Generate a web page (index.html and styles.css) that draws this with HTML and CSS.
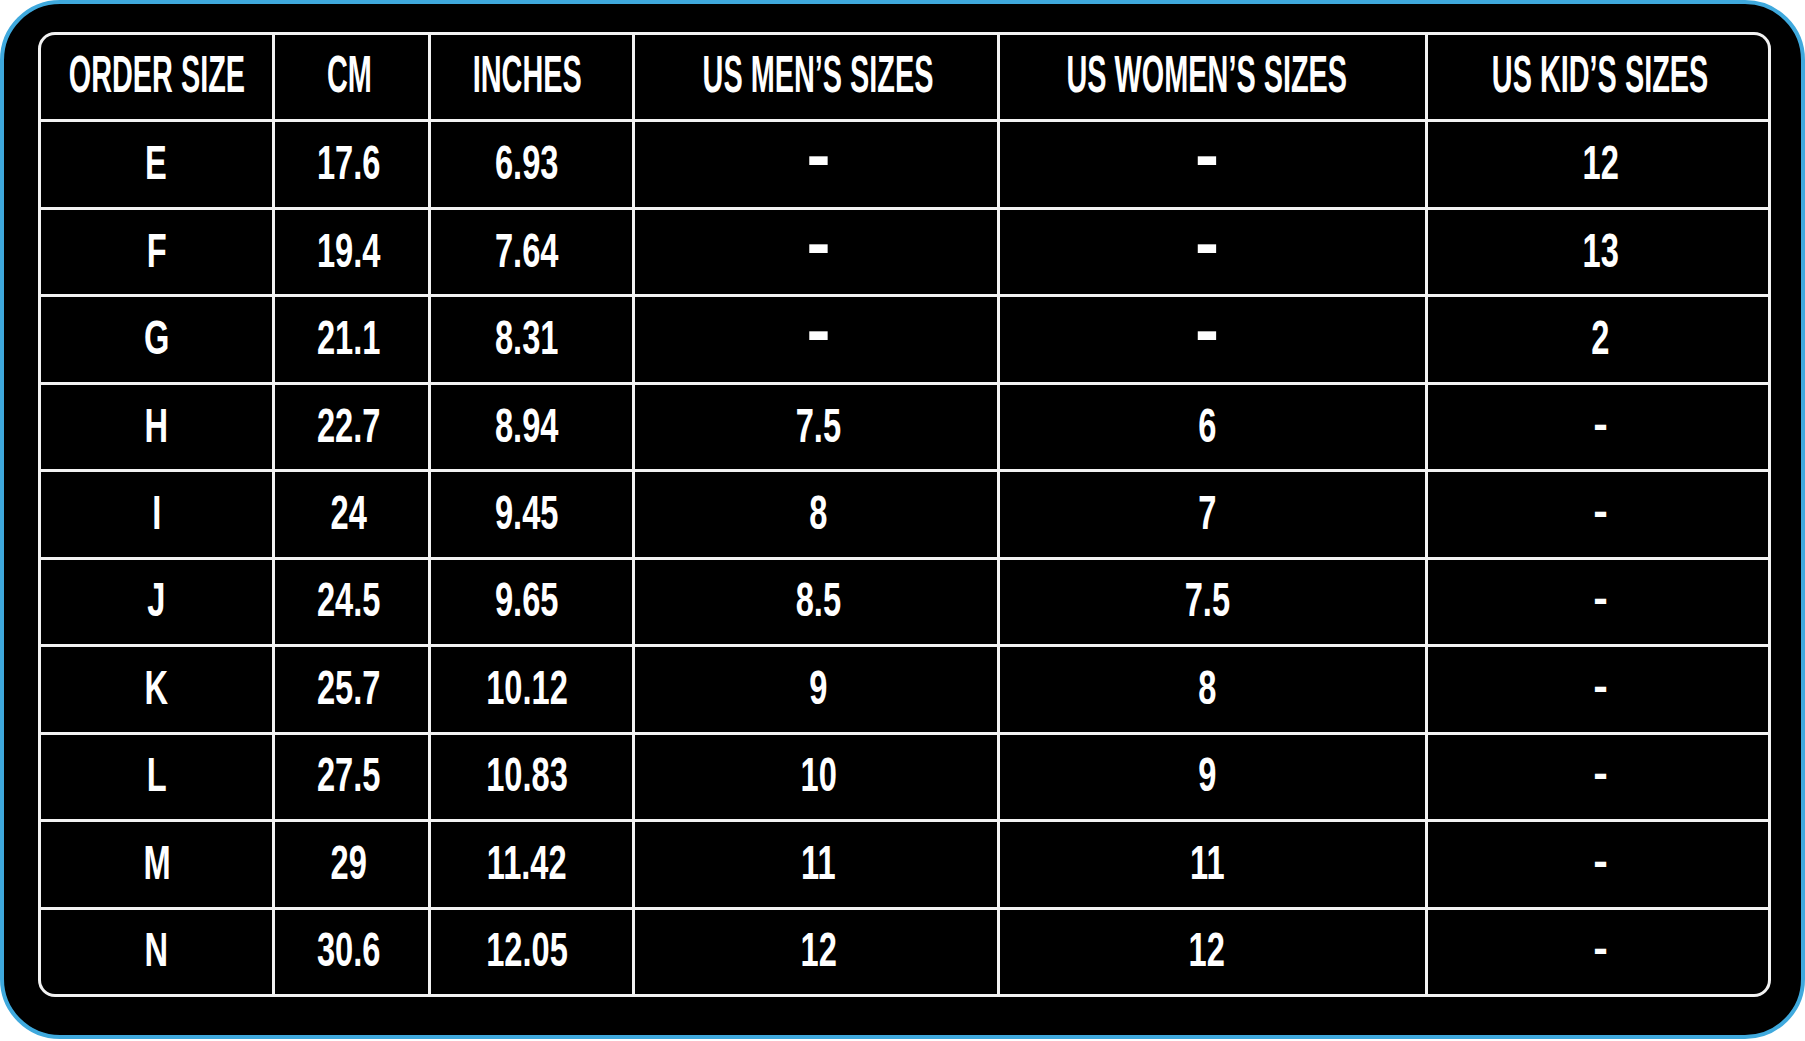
FILE: index.html
```html
<!DOCTYPE html>
<html lang="en">
<head>
<meta charset="utf-8">
<title>Size chart</title>
<link rel="stylesheet" href="styles.css">
</head>
<body>
<div class="frame">
  <div class="chart">
    <div class="cell head"><span class="t">ORDER SIZE</span></div>
    <div class="cell head"><span class="t">CM</span></div>
    <div class="cell head"><span class="t">INCHES</span></div>
    <div class="cell head"><span class="t">US MEN’S SIZES</span></div>
    <div class="cell head"><span class="t">US WOMEN’S SIZES</span></div>
    <div class="cell head"><span class="t">US KID’S SIZES</span></div>

    <div class="cell"><span class="t">E</span></div>
    <div class="cell"><span class="t">17.6</span></div>
    <div class="cell"><span class="t">6.93</span></div>
    <div class="cell"><span class="dash-lg">-</span></div>
    <div class="cell"><span class="dash-lg">-</span></div>
    <div class="cell"><span class="t">12</span></div>

    <div class="cell"><span class="t">F</span></div>
    <div class="cell"><span class="t">19.4</span></div>
    <div class="cell"><span class="t">7.64</span></div>
    <div class="cell"><span class="dash-lg">-</span></div>
    <div class="cell"><span class="dash-lg">-</span></div>
    <div class="cell"><span class="t">13</span></div>

    <div class="cell"><span class="t">G</span></div>
    <div class="cell"><span class="t">21.1</span></div>
    <div class="cell"><span class="t">8.31</span></div>
    <div class="cell"><span class="dash-lg">-</span></div>
    <div class="cell"><span class="dash-lg">-</span></div>
    <div class="cell"><span class="t">2</span></div>

    <div class="cell"><span class="t">H</span></div>
    <div class="cell"><span class="t">22.7</span></div>
    <div class="cell"><span class="t">8.94</span></div>
    <div class="cell"><span class="t">7.5</span></div>
    <div class="cell"><span class="t">6</span></div>
    <div class="cell"><span class="dash-sm">-</span></div>

    <div class="cell"><span class="t">I</span></div>
    <div class="cell"><span class="t">24</span></div>
    <div class="cell"><span class="t">9.45</span></div>
    <div class="cell"><span class="t">8</span></div>
    <div class="cell"><span class="t">7</span></div>
    <div class="cell"><span class="dash-sm">-</span></div>

    <div class="cell"><span class="t">J</span></div>
    <div class="cell"><span class="t">24.5</span></div>
    <div class="cell"><span class="t">9.65</span></div>
    <div class="cell"><span class="t">8.5</span></div>
    <div class="cell"><span class="t">7.5</span></div>
    <div class="cell"><span class="dash-sm">-</span></div>

    <div class="cell"><span class="t">K</span></div>
    <div class="cell"><span class="t">25.7</span></div>
    <div class="cell"><span class="t">10.12</span></div>
    <div class="cell"><span class="t">9</span></div>
    <div class="cell"><span class="t">8</span></div>
    <div class="cell"><span class="dash-sm">-</span></div>

    <div class="cell"><span class="t">L</span></div>
    <div class="cell"><span class="t">27.5</span></div>
    <div class="cell"><span class="t">10.83</span></div>
    <div class="cell"><span class="t">10</span></div>
    <div class="cell"><span class="t">9</span></div>
    <div class="cell"><span class="dash-sm">-</span></div>

    <div class="cell"><span class="t">M</span></div>
    <div class="cell"><span class="t">29</span></div>
    <div class="cell"><span class="t">11.42</span></div>
    <div class="cell"><span class="t">11</span></div>
    <div class="cell"><span class="t">11</span></div>
    <div class="cell"><span class="dash-sm">-</span></div>

    <div class="cell"><span class="t">N</span></div>
    <div class="cell"><span class="t">30.6</span></div>
    <div class="cell"><span class="t">12.05</span></div>
    <div class="cell"><span class="t">12</span></div>
    <div class="cell"><span class="t">12</span></div>
    <div class="cell"><span class="dash-sm">-</span></div>
  </div>
</div>
</body>
</html>
```

FILE: styles.css
```css
html, body {
  margin: 0;
  padding: 0;
  background: #ffffff;
}

body {
  width: 1805px;
  height: 1041px;
  overflow: hidden;
  font-family: "Liberation Sans", Arial, sans-serif;
}

.frame {
  box-sizing: border-box;
  width: 1805px;
  height: 1039px;
  border: 4px solid #3fa9dd;
  border-radius: 60px;
  background: #000000;
  padding: 28px 30px 38px 34px;
  display: flex;
}

.chart {
  flex: 1;
  box-sizing: border-box;
  border: 3px solid #f2f2f2;
  border-radius: 17px;
  overflow: hidden;
  background: #f2f2f2;
  display: grid;
  grid-template-columns: 231fr 153fr 201fr 362fr 425fr 340fr;
  grid-template-rows: repeat(11, minmax(0, 1fr));
  gap: 3px;
}

.cell {
  box-sizing: border-box;
  background: #000000;
  color: #ffffff;
  display: flex;
  align-items: center;
  justify-content: center;
  overflow: visible;
  white-space: nowrap;
  min-width: 0;
  min-height: 0;
  padding-bottom: 3px;
}

/* per-column optical offsets of the text */
.cell:nth-child(6n+2) { padding-right: 5px; }
.cell:nth-child(6n+3) { padding-right: 9px; }
.cell:nth-child(6n+4) { padding-left: 5px; }
.cell:nth-child(6n+5) { padding-right: 11px; }
.cell:nth-child(6n+6) { padding-left: 5px; }

.t {
  display: inline-block;
  font-weight: 700;
  font-size: 48px;
  line-height: 1;
  transform: scaleX(0.68);
  transform-origin: center;
}

.head {
  padding-bottom: 6px;
}

.head .t {
  font-size: 52px;
  transform: scaleX(0.555);
}

.dash-lg {
  display: inline-block;
  font-weight: 700;
  font-size: 72px;
  line-height: 0.5;
  margin-bottom: 18px;
}

.dash-sm {
  display: inline-block;
  font-weight: 700;
  font-size: 44px;
  line-height: 1;
  margin-bottom: 4px;
}
```
